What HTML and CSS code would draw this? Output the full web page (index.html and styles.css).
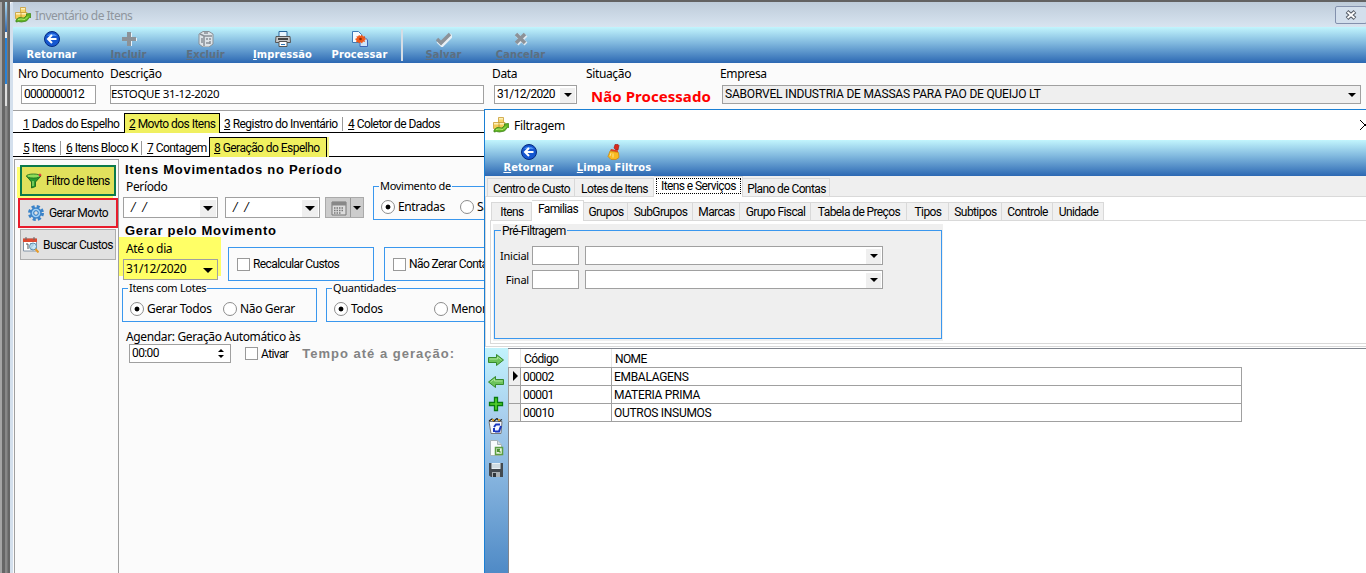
FILE: index.html
```html
<!DOCTYPE html>
<html lang="pt-BR">
<head>
  <meta charset="UTF-8">
  <title>Inventário de Itens</title>
  <link rel="stylesheet" href="styles.css">
</head>
<body>
  <svg class="simbolos" width="0" height="0">
    <symbol id="i-app" viewBox="0 0 16 16">
      <path d="M5.500.5h5v5h-5z" fill="#f7d667" stroke="#c9a03b" stroke-width=".8"/>
      <path d="M.5 5.500h5.500v6H.5zM6 5.500h6v6H6z" fill="#f3cb55" stroke="#c9a03b" stroke-width=".8"/>
      <path d="M6 1h4v1.500H6zM1 6h4.500v1.500H1zM6.500 6h5v1.500h-5z" fill="#fdf0bb"/>
      <path d="M1 13l3-2.500 5 .5 3-3-1-1 4.500-.5.5 4-1.300-.3-3.200 3.800-5 1-3-.5-2.500.5z" fill="#63b522" stroke="#3b8416" stroke-width=".8"/>
      <path d="M3 12.500l3-.5 4 .5 3-3" fill="none" stroke="#b7ea6d"/>
    </symbol>
    <symbol id="i-voltar" viewBox="0 0 16 16">
      <circle cx="8" cy="8" r="7.500" fill="#1557d0" stroke="#052a80"/>
      <path d="M3 5a6 5 0 0 1 10 0z" fill="#4d90f5"/>
      <path d="M12.500 8H5M8 4L4 8l4 4" fill="none" stroke="#fff" stroke-width="2"/>
    </symbol>
    <symbol id="i-mais" viewBox="0 0 16 16">
      <path d="M7 2h4v5h5v3h-5v5H7v-5H2V7h5z" fill="#e8f2fa"/>
      <path d="M6 1h4v5h5v4h-5v5H6v-5H1V6h5z" fill="#8c9298"/>
    </symbol>
    <symbol id="i-lixo" viewBox="0 0 16 16">
      <path d="M1 3l4-2.500h6L15 3v10l-4 3H5l-4-3z" fill="#dde3e8" stroke="#899097"/>
      <path d="M2 3l4 2h8M6 5v10M4 7v5M8 8h2m2-1v2m-4 3h4m0-2v3M6 2h4" fill="none" stroke="#899097" stroke-width="1.500"/>
    </symbol>
    <symbol id="i-impressora" viewBox="0 0 16 16">
      <path d="M4 .5h8v5H4z" fill="#e8f5ff" stroke="#28669b"/>
      <path d="M1 5.500h14l.5 6H.5z" fill="#c8c8c8" stroke="#555"/>
      <path d="M3 8h10" stroke="#444" stroke-width="2"/>
      <path d="M4 10.500h8v5H4z" fill="#fff" stroke="#555"/>
      <path d="M6 13.500h4" stroke="#2e75b6"/>
    </symbol>
    <symbol id="i-processar" viewBox="0 0 16 16">
      <path d="M.5.500h6l3 3v8h-9z" fill="#f4faff" stroke="#3d7bb8"/>
      <path d="M8 6.500h5l2.500 2.500v6.500H8z" fill="#cfe5fa" stroke="#3d66b8"/>
      <path d="M7 4l1.500 1L10 3.500l1 2 2-.5-.5 2 2 1-2 1 .5 2-2-.5-1 2L8.500 11 7 12.500 6 11l-2 .5.500-2L3 8l2-1-.5-2L6 5.500z" fill="#f15a1b"/>
      <circle cx="8.500" cy="8" r="1.300" fill="#8f2b00"/>
    </symbol>
    <symbol id="i-ok" viewBox="0 0 16 16">
      <path d="M1 9l4 4L15 3" fill="none" stroke="#e8f0f6" stroke-width="4" transform="translate(1 1)"/>
      <path d="M1 8l4 4L14 3" fill="none" stroke="#8c9298" stroke-width="3.500"/>
    </symbol>
    <symbol id="i-x" viewBox="0 0 16 16">
      <path d="M4 4l9 9M13 4l-9 9" stroke="#e0eaf2" stroke-width="4"/>
      <path d="M3 3l9 9M12 3l-9 9" stroke="#8c9298" stroke-width="3.500"/>
    </symbol>
    <symbol id="i-vassoura" viewBox="0 0 16 16">
      <path d="M8 4l1-3.500h3l1 1-1 4.500h-2z" fill="#d92a1c" stroke="#9a1510" stroke-width=".6"/>
      <path d="M5 5l7 1.500v2L4 7z" fill="#e2401f"/>
      <path d="M4 7l8.500 1.500.5 5-3 2H5l-3-3z" fill="#f8b920" stroke="#c9830c" stroke-width=".7"/>
      <path d="M5 9l-1 3m3-2.500v4" stroke="#fde58a"/>
    </symbol>
    <symbol id="i-funil" viewBox="0 0 16 16">
      <path d="M.5 3l5 6v6l4-1.500V9L15 3z" fill="#2b9a2e" stroke="#0b5b15" stroke-width=".8"/>
      <ellipse cx="7.500" cy="3" rx="7" ry="2" fill="#8fdc5a" stroke="#146b1c" stroke-width=".8"/>
      <path d="M7 8v5" stroke="#9be070" stroke-width="1.300"/>
      <path d="M14 0l.7 1.500 1.300.5-1.300.7L14 4l-.7-1.300L12 2l1.300-.5z" fill="#e5243b"/>
    </symbol>
    <symbol id="i-engrenagem" viewBox="0 0 16 16">
      <circle cx="8" cy="8" r="6.500" fill="none" stroke="#3b83c8" stroke-width="3" stroke-dasharray="3 2.100"/>
      <circle cx="8" cy="8" r="5" fill="#9fd0f7" stroke="#3b83c8" stroke-width="1.500"/>
      <circle cx="8" cy="8" r="2.300" fill="#e1e1e1" stroke="#2775bf"/>
    </symbol>
    <symbol id="i-agenda" viewBox="0 0 16 16">
      <path d="M.5 2h13v12H.5z" fill="#fff" stroke="#8293a5"/>
      <path d="M0 1.500h14V5H0z" fill="#dc4a30"/>
      <path d="M3 0v3M11 0v3" stroke="#666"/>
      <path d="M3 7h2v5M7 7h3v2H8v3h2" fill="none" stroke="#555"/>
      <circle cx="10" cy="9.500" r="3.500" fill="#b9e2f8" fill-opacity=".8" stroke="#5d8fae"/>
      <path d="M12.500 12l3 3.500" stroke="#e59b2b" stroke-width="2"/>
    </symbol>
    <symbol id="i-calendario" viewBox="0 0 16 16">
      <path d="M1 2h14v13H1z" fill="#dcdcdc" stroke="#777"/>
      <path d="M1 2h14v3.500H1z" fill="#888"/>
      <path d="M3 8h10M3 10.500h10M3 13h7" stroke="#777" stroke-width="1.300" stroke-dasharray="1.500 1"/>
    </symbol>
    <symbol id="i-seta" viewBox="0 0 16 16">
      <path d="M.5 5.500h8v-3l7 5.500-7 5.500v-3h-8z" fill="#6cc35b" stroke="#358a2d"/>
      <path d="M1.500 7h8V5l4 3" fill="none" stroke="#a9e397"/>
    </symbol>
    <symbol id="i-adicionar" viewBox="0 0 16 16">
      <path d="M6.500 1.500h3v5h5v3h-5v5h-3v-5h-5v-3h5z" fill="#54d12c" stroke="#087a10" stroke-width="1.300"/>
    </symbol>
    <symbol id="i-lixeira" viewBox="0 0 16 16">
      <path d="M1 3.500h13l-1 12H3z" fill="#f5f7ff" stroke="#777"/>
      <path d="M1 3l3-2 2 2 3-2.500L11 3l3-1.500" fill="#fff" stroke="#222" stroke-width="1.300"/>
      <path d="M4 2h2m4 0h2" stroke="#d39a28" stroke-width="2"/>
      <path d="M6 9l2-2.500h4M13 8l-2 5.500H7M6 10v4" fill="none" stroke="#1836bd" stroke-width="2"/>
    </symbol>
    <symbol id="i-exportar" viewBox="0 0 16 16">
      <path d="M2.500.5h7l4 4v11h-11z" fill="#f8fbfc" stroke="#a5b3b8"/>
      <path d="M9.500.5v4h4" fill="#d4dde0" stroke="#a5b3b8"/>
      <path d="M7.500 7.500h7v7h-7z" fill="#e6f5dd" stroke="#5c9e43" stroke-width="1.500"/>
      <path d="M12.500 12.500l-3-3M9.500 12V9.500H12" fill="none" stroke="#4c9132" stroke-width="1.300"/>
    </symbol>
    <symbol id="i-disquete" viewBox="0 0 16 16">
      <path d="M1 1h14v14H3l-2-1.500z" fill="#43494f"/>
      <path d="M3.500 1h9v6h-9z" fill="#e9f1f5"/>
      <path d="M4 3h8M4 5h8" stroke="#b7c7cf"/>
      <path d="M4 10h8v5H4z" fill="#a9afb3"/>
      <path d="M5 11h3v4H5z" fill="#30353a"/>
    </symbol>
  </svg>

  <div class="tela">
    <div class="fundo"></div>

    <!-- Janela principal -->
    <div class="janela">
      <div class="barra-titulo">
        <svg class="icone"><use href="#i-app"/></svg>
        <span class="titulo">Inventário de Itens</span>
        <span class="fechar"><svg width="12" height="10" viewBox="0 0 12 10"><path d="M2 1.500l8 7M10 1.500l-8 7" stroke="#555c66" stroke-width="4"/><path d="M2.500 2l7 6M9.500 2l-7 6" stroke="#fff" stroke-width="1.800"/></svg></span>
      </div>

      <div class="ferramentas">
        <div class="botao"><svg class="icone"><use href="#i-voltar"/></svg><span>Retornar</span></div>
        <div class="botao inativo"><svg class="icone"><use href="#i-mais"/></svg><span><u>I</u>ncluir</span></div>
        <div class="botao inativo"><svg class="icone"><use href="#i-lixo"/></svg><span><u>E</u>xcluir</span></div>
        <div class="botao"><svg class="icone"><use href="#i-impressora"/></svg><span><u>I</u>mpressão</span></div>
        <div class="botao"><svg class="icone"><use href="#i-processar"/></svg><span>Processar</span></div>
        <div class="separador"></div>
        <div class="botao inativo"><svg class="icone"><use href="#i-ok"/></svg><span><u>S</u>alvar</span></div>
        <div class="botao inativo"><svg class="icone"><use href="#i-x"/></svg><span><u>C</u>ancelar</span></div>
      </div>

      <div class="cabecalho">
        <div class="campo c-nro"><label>Nro Documento</label><div class="caixa">0000000012</div></div>
        <div class="campo c-desc"><label>Descrição</label><div class="caixa tahoma">ESTOQUE 31-12-2020</div></div>
        <div class="campo c-data"><label>Data</label><div class="caixa">31/12/2020<i class="seta"></i></div></div>
        <div class="campo c-sit"><label>Situação</label><strong>Não Processado</strong></div>
        <div class="campo c-emp"><label>Empresa</label><div class="caixa cinza">SABORVEL INDUSTRIA DE MASSAS PARA PAO DE QUEIJO LT<i class="seta"></i></div></div>
      </div>

      <div class="abas primeira">
        <span class="aba a1"><u>1</u> Dados do Espelho</span>
        <span class="aba a2 ativa"><u>2</u> Movto dos Itens</span>
        <span class="aba a3 div"><u>3</u> Registro do Inventário</span>
        <span class="aba a4"><u>4</u> Coletor de Dados</span>
      </div>
      <div class="abas">
        <span class="aba b1 div"><u>5</u> Itens</span>
        <span class="aba b2 div"><u>6</u> Itens Bloco K</span>
        <span class="aba b3"><u>7</u> Contagem</span>
        <span class="aba b4 ativa"><u>8</u> Geração do Espelho</span>
      </div>

      <div class="corpo">
        <div class="lateral">
          <div class="acao filtro"><svg class="icone"><use href="#i-funil"/></svg>Filtro de Itens</div>
          <div class="acao gerar"><svg class="icone"><use href="#i-engrenagem"/></svg>Gerar Movto</div>
          <div class="acao buscar"><svg class="icone"><use href="#i-agenda"/></svg>Buscar Custos</div>
        </div>

        <div class="painel">
          <h2>Itens Movimentados no Período</h2>
          <div class="linha periodo">
            <div class="campo">
              <label>Período</label>
              <div class="datas">
                <div class="caixa data"><em>/</em><em>/</em><i class="seta"></i></div>
                <div class="caixa data"><em>/</em><em>/</em><i class="seta"></i></div>
                <div class="calendario"><svg class="icone"><use href="#i-calendario"/></svg><i class="seta"></i></div>
              </div>
            </div>
            <div class="grupo movimento">
              <span class="legenda">Movimento de</span>
              <span class="radio marcado r80">Entradas</span><span class="radio">Saídas</span>
            </div>
          </div>

          <h2 class="segundo">Gerar pelo Movimento</h2>
          <div class="linha ate">
            <div class="campo destaque">
              <label>Até o dia</label>
              <div class="caixa data tahoma">31/12/2020<i class="seta"></i></div>
            </div>
            <div class="grupo recalcular"><span class="check">Recalcular Custos</span></div>
            <div class="grupo zerar"><span class="check">Não Zerar Contagem</span></div>
          </div>

          <div class="linha lotes">
            <div class="grupo g-lotes">
              <span class="legenda">Itens com Lotes</span>
              <span class="radio marcado r93">Gerar Todos</span><span class="radio">Não Gerar</span>
            </div>
            <div class="grupo g-qtd">
              <span class="legenda">Quantidades</span>
              <span class="radio marcado r100">Todos</span><span class="radio">Menor</span>
            </div>
          </div>

          <label class="agendar">Agendar: Geração Automático às</label>
          <div class="linha hora">
            <div class="caixa">00:00<span class="giro"><i></i><i></i></span></div>
            <span class="check">Ativar</span>
            <b>Tempo até a geração:</b>
          </div>
        </div>
      </div>
    </div>

    <!-- Janela de filtragem -->
    <div class="dialogo">
      <div class="barra-titulo">
        <svg class="icone"><use href="#i-app"/></svg>
        <span class="titulo">Filtragem</span>
        <svg class="xis" width="10" height="10" viewBox="0 0 10 10"><path d="M0 0l10 10M10 0L0 10" stroke="#000"/></svg>
      </div>
      <div class="ferramentas">
        <div class="botao retornar"><svg class="icone"><use href="#i-voltar"/></svg><span><u>R</u>etornar</span></div>
        <div class="botao limpa"><svg class="icone"><use href="#i-vassoura"/></svg><span><u>L</u>impa Filtros</span></div>
      </div>

      <div class="guias">
        <span class="guia g1">Centro de Custo</span>
        <span class="guia g2">Lotes de Itens</span>
        <span class="guia g3 ativa"><span class="foco">Itens e Serviços</span></span>
        <span class="guia g4">Plano de Contas</span>
      </div>
      <div class="pagina">
        <div class="guias internas">
          <span class="guia h1">Itens</span>
          <span class="guia h2 ativa">Familias</span>
          <span class="guia h3">Grupos</span>
          <span class="guia h4">SubGrupos</span>
          <span class="guia h5">Marcas</span>
          <span class="guia h6">Grupo Fiscal</span>
          <span class="guia h7">Tabela de Preços</span>
          <span class="guia h8">Tipos</span>
          <span class="guia h9">Subtipos</span>
          <span class="guia h10">Controle</span>
          <span class="guia h11">Unidade</span>
        </div>
        <div class="pagina-interna">
          <div class="fundo-grupo">
            <div class="grupo pre">
              <span class="legenda">Pré-Filtragem</span>
              <div class="faixa"><label>Inicial</label><div class="caixa cod"></div><div class="caixa combo"><i class="seta"></i></div></div>
              <div class="faixa"><label>Final</label><div class="caixa cod"></div><div class="caixa combo"><i class="seta"></i></div></div>
            </div>
          </div>
        </div>
      </div>

      <div class="resultado">
        <div class="atalhos">
          <svg class="icone"><use href="#i-seta"/></svg>
          <svg class="icone invertida"><use href="#i-seta"/></svg>
          <svg class="icone"><use href="#i-adicionar"/></svg>
          <svg class="icone"><use href="#i-lixeira"/></svg>
          <svg class="icone"><use href="#i-exportar"/></svg>
          <svg class="icone"><use href="#i-disquete"/></svg>
        </div>
        <div class="grade">
          <table>
            <tr><th class="ind"></th><th class="cod">Código</th><th>NOME</th></tr>
            <tr><td class="ind atual"><i></i></td><td>00002</td><td class="nome">EMBALAGENS</td></tr>
            <tr><td class="ind"></td><td>00001</td><td class="nome">MATERIA PRIMA</td></tr>
            <tr><td class="ind"></td><td>00010</td><td class="nome">OUTROS INSUMOS</td></tr>
          </table>
        </div>
      </div>
    </div>
  </div>
</body>
</html>
```

FILE: styles.css
```css
* {
  box-sizing: border-box;
}

body {
  margin: 0;
  overflow: hidden;
  font-family: Roboto, "Liberation Sans", sans-serif;
  font-size: 12px;
  line-height: 14px;
  letter-spacing: -0.6px;
  color: #000;
  white-space: nowrap;
}

.simbolos {
  position: absolute;
}

.tela {
  position: relative;
  display: flex;
  width: 1366px;
  height: 573px;
  background: #fbfbfb;
  border-top: 2px solid #626262;
  overflow: hidden;
}

/* restos das janelas que ficam atras */
.fundo {
  width: 10px;
  flex: none;
  border-left: 2px solid #a5a5a5;
  border-right: 2px solid #666;
  background:
    linear-gradient(90deg, #666 3px, transparent 3px, transparent 5px, #777 5px),
    linear-gradient(#b6dff3, #2d65ad 30px, #e9eef3 30px, #e9eef3 36px, #2983d8 36px, #2983d8 82px, #ddd 82px, #ddd 104px, #888 104px);
}

.icone {
  width: 16px;
  height: 16px;
  flex: none;
  display: block;
}

.janela {
  flex: 1;
  min-width: 0;
  display: flex;
  flex-direction: column;
  border-left: 3px solid #d4e0ed;
  border-top-left-radius: 4px;
}

.barra-titulo {
  display: flex;
  align-items: center;
  height: 25px;
  flex: none;
  padding-left: 2px;
  background: linear-gradient(#bdcbd9, #d8e4f0);
}

.titulo {
  font: 12px/16px "Noto Sans", sans-serif;
  letter-spacing: -0.5px;
  margin-left: 4px;
  padding-top: 2px;
  color: #8f969e;
}

.fechar {
  display: flex;
  align-items: center;
  justify-content: center;
  width: 32px;
  height: 18px;
  margin-left: auto;
  margin-right: -1px;
  border: 1px solid #8391ad;
  border-radius: 2px;
  background: #d3dfec;
}

.ferramentas {
  display: flex;
  height: 36px;
  flex: none;
  background: linear-gradient(#c2f5fd, #80b8de 45%, #2c68b3);
}

.botao {
  display: flex;
  flex-direction: column;
  align-items: center;
  width: 77px;
  padding-top: 4px;
  font: bold 11px/16px "DejaVu Sans Condensed", "DejaVu Sans", sans-serif;
  font-stretch: condensed;
  letter-spacing: 0.1px;
  color: #fff;
}

.botao.inativo {
  color: #5d6f80;
}

.separador {
  width: 2px;
  margin: 2px 2px 2px 3px;
  background: #d5dde5;
}

/* campos */
label,
.tahoma,
.radio,
.legenda {
  font-family: "Noto Sans", sans-serif;
  font-size: 12px;
  letter-spacing: -0.36px;
}

.cabecalho {
  display: flex;
  height: 48px;
  flex: none;
  padding: 4px 5px 0;
  border-bottom: 1px solid #a0a0a0;
}

.campo label {
  display: block;
  height: 18px;
  line-height: 14px;
}

.caixa {
  display: flex;
  align-items: center;
  height: 19px;
  padding: 0 2px;
  border: 1px solid #a0a0a0;
  background: #fff;
  line-height: 16px;
  padding-bottom: 1px;
}

.caixa.cinza {
  background: #efefef;
}

.seta {
  display: flex;
  align-items: center;
  justify-content: center;
  width: 15px;
  height: 15px;
  margin-left: auto;
  margin-right: -1px;
  position: relative;
  top: 1px;
  background: #efefef;
}

.seta::before {
  content: "";
  border: 4px solid transparent;
  border-top-color: #000;
  border-bottom: 0;
}

.c-nro { width: 92px; }
.c-nro .caixa { width: 75px; margin-left: 3px; letter-spacing: -0.75px; }
.c-desc { width: 382px; }
.c-desc .caixa { width: 374px; font-size: 11.500px; padding-left: 0; }
.c-data { width: 94px; }
.c-data .caixa { width: 83px; margin-left: 2px; }
.c-sit { width: 134px; }
.c-emp .caixa { width: 639px; margin-left: 2px; letter-spacing: -0.2px; }

.c-sit strong {
  display: block;
  margin: 1px 0 0 5px;
  font: bold 15px/20px "Noto Sans", sans-serif;
  letter-spacing: 0.05px;
  color: #f00;
}

/* abas */
.abas {
  display: flex;
  align-items: flex-end;
  height: 24px;
  flex: none;
  padding-left: 5px;
  letter-spacing: -0.54px;
  background: linear-gradient(#000, #000) bottom / 100% 1px no-repeat #fff;
}

.abas.primeira {
  height: 22px;
}

.aba {
  height: 20px;
  padding: 4px 0 0 5px;
}

.aba.ativa {
  padding: 3px 0 0 4px;
  background: #f0f060;
  border: 1px solid #000;
  border-bottom: 0;
}

.aba.div {
  background: linear-gradient(#999, #999) right 4px / 1px 14px no-repeat;
}

.a1 { width: 106px; }
.a2 { width: 96px; }
.a3 { width: 123px; padding-left: 4px; }
.b1 { width: 43px; }
.b2 { width: 81px; }
.b3 { width: 67px; }
.b4 { width: 118px; box-shadow: 2px 0 #f6f68a; }

/* corpo */
.corpo {
  display: flex;
  flex: 1;
  padding: 2px 0 0 1px;
}

.lateral {
  width: 105px;
  padding: 5px 0 0 4px;
  border: 1px solid #a0a0a0;
  border-bottom: 0;
  flex: none;
}

.acao {
  display: flex;
  align-items: center;
  gap: 4px;
  height: 31px;
  width: 96px;
  margin-left: 1px;
  padding-left: 4px;
  background: #e1e1e1;
  border: 1px solid #adadad;
}

.acao.filtro {
  background: #e1e15c;
  border: 2px solid #0b7a4b;
  box-shadow: -3px 2px #ffff70;
}

.acao.gerar {
  width: 100px;
  height: 30px;
  margin: 2px 0 0 -1px;
  padding-left: 8px;
  gap: 5px;
  border: 2px solid #e81c2c;
}

.acao.buscar {
  padding-left: 2px;
  margin-top: 1px;
}

.painel {
  flex: 1;
  padding-left: 4px;
}

h2 {
  margin: 2px 0 -1px 2px;
  font: bold 13px/18px "Liberation Sans", sans-serif;
  letter-spacing: 0.72px;
}

.linha {
  display: flex;
}

.periodo {
  height: 42px;
}

.periodo label {
  padding: 2px 0 0 3px;
  height: 19px;
}

.datas {
  display: flex;
  gap: 7px;
}

.caixa.data {
  width: 95px;
  height: 21px;
}

.data .seta {
  width: 16px;
  height: 17px;
}

.data .seta::before {
  border-width: 5px;
  border-bottom: 0;
}

.data em {
  margin: 0 2px 0 5px;
}

.calendario {
  display: flex;
  align-items: center;
  width: 39px;
  height: 21px;
  margin-left: -2px;
  padding-left: 5px;
  background: #ccc;
  border: 1px solid #aaa;
}

.calendario .seta {
  width: 13px;
  height: 19px;
  margin: 0 0 0 auto;
  top: 0;
  background: none;
  border-left: 1px solid #999;
}

.grupo {
  position: relative;
  display: flex;
  border: 1px solid #3a97ee;
}

.legenda {
  position: absolute;
  left: 5px;
  top: -8px;
  padding: 0 1px;
  font-size: 11px;
  line-height: 14px;
  letter-spacing: -0.3px;
  background: #fbfbfb;
}

.radio,
.check {
  display: flex;
  align-items: center;
}

.radio::before {
  content: "";
  width: 12px;
  height: 12px;
  margin-right: 3px;
  border: 1px solid #8c8c8c;
  border-radius: 50%;
  background: #fff;
}

.radio.marcado::before {
  background: radial-gradient(circle, #000 2px, #fff 2.8px);
}

.r80 { width: 79px; }
.r93 { width: 93px; }
.r100 { width: 100px; }

.check::before {
  content: "";
  width: 11px;
  height: 11px;
  margin-right: 3px;
  border: 1px solid #999;
  background: #fff;
}

.movimento {
  width: 200px;
  height: 34px;
  margin: 8px 0 0 9px;
  padding: 8px 0 0 7px;
}

.ate {
  height: 41px;
  margin-top: -3px;
}

.destaque {
  width: 102px;
  height: 39px;
  margin-left: -4px;
  padding-left: 4px;
  background: #ffff66;
}

.destaque label {
  padding: 5px 0 0 3px;
  height: 22px;
}

.destaque .caixa,
.destaque .seta {
  background: #ffff66;
}

.recalcular,
.zerar {
  height: 34px;
  margin-top: 10px;
  padding-left: 8px;
}

.recalcular {
  width: 146px;
  margin-left: 7px;
}

.zerar {
  width: 160px;
  margin-left: 10px;
}

.lotes {
  margin: 10px 0 0 -1px;
}

.g-lotes,
.g-qtd {
  height: 34px;
  padding: 8px 0 0 7px;
}

.g-lotes { width: 195px; }
.g-qtd { width: 200px; margin-left: 9px; }

.agendar {
  display: block;
  margin: 8px 0 0 3px;
}

.hora {
  align-items: center;
  margin: 0 0 0 6px;
}

.hora .caixa {
  width: 102px;
  margin-right: 14px;
}

.giro {
  display: flex;
  flex-direction: column;
  gap: 3px;
  margin-left: auto;
  padding: 0 4px;
}

.giro i {
  border: 3px solid transparent;
  border-top: 0;
  border-bottom-color: #000;
}

.giro i + i {
  transform: rotate(180deg);
}

.hora b {
  margin-left: 14px;
  font: bold 13px/16px "Liberation Sans", sans-serif;
  letter-spacing: 1px;
  color: #838383;
}

/* janela de filtragem, por cima da principal */
.dialogo {
  position: absolute;
  left: 484px;
  top: 107px;
  width: 882px;
  height: 464px;
  display: flex;
  flex-direction: column;
  background: #fff;
  border: 1px solid #1a7fd4;
  border-right: 0;
  border-bottom: 0;
}

.dialogo .barra-titulo {
  height: 30px;
  padding-left: 8px;
  background: #fff;
}

.dialogo .titulo {
  margin-left: 5px;
  letter-spacing: -0.3px;
  color: #000;
}

.xis {
  margin-left: auto;
  margin-right: -4px;
}

.botao.retornar {
  width: 87px;
}

.botao.limpa {
  width: 84px;
}

.guias {
  display: flex;
  align-items: flex-end;
  height: 21px;
  flex: none;
  padding-left: 2px;
  background: linear-gradient(#d9d9d9, #d9d9d9) bottom / 100% 1px no-repeat #efefef;
}

.guia {
  height: 19px;
  padding: 3px 0 0 1px;
  text-align: center;
  background: #f0f0f0;
  border: 1px solid #d9d9d9;
  border-left: 0;
}

.guia:first-child {
  border-left: 1px solid #d9d9d9;
}

.guia.ativa {
  height: 21px;
  background: #fff;
  border-bottom: 0;
  padding-top: 2px;
}

.foco {
  outline: 1px dotted #000;
  padding: 0 4px;
}

.g1 { width: 88px; }
.g2 { width: 79px; }
.g3 { width: 89px; }
.g4 { width: 87px; }

.pagina {
  height: 150px;
  padding: 3px 0 0 4px;
  border-left: 1px solid #d9d9d9;
  border-bottom: 1px solid #d9d9d9;
}

.internas {
  background: linear-gradient(#d9d9d9, #d9d9d9) bottom / 100% 1px no-repeat #fff;
  padding-left: 1px;
}

.internas .guia {
  line-height: 13px;
}

.h1 { width: 41px; }
.h2 { width: 52px; }
.h3 { width: 44px; }
.h4 { width: 65px; }
.h5 { width: 47px; }
.h6 { width: 71px; }
.h7 { width: 96px; }
.h8 { width: 42px; }
.h9 { width: 53px; }
.h10 { width: 51px; }
.h11 { width: 51px; }

.pagina-interna {
  height: 123px;
  padding: 3px 0 0 2px;
  border-left: 1px solid #d9d9d9;
  border-bottom: 1px solid #d9d9d9;
}

.fundo-grupo {
  width: 450px;
  height: 117px;
  padding: 6px 0 0 1px;
  background: #efefef;
}

.pre {
  flex-direction: column;
  gap: 5px;
  width: 448px;
  height: 109px;
  padding-top: 15px;
}

.pre .legenda {
  left: 6px;
  top: -7px;
  background: #efefef;
  font-family: Roboto, sans-serif;
  font-size: 12px;
  letter-spacing: -0.6px;
}

.faixa {
  display: flex;
  align-items: center;
}

.faixa label {
  width: 34px;
  margin-right: 3px;
  text-align: right;
  font-size: 11px;
  letter-spacing: -0.2px;
}

.faixa .cod {
  width: 47px;
  margin-right: 6px;
}

.faixa .combo {
  width: 298px;
}

.resultado {
  display: flex;
  flex: 1;
  margin-top: 1px;
}

.atalhos {
  display: flex;
  flex-direction: column;
  gap: 6px;
  width: 23px;
  padding: 4px 0 0 3px;
  background: linear-gradient(#c2f3fc, #a9cfee 30%, #4f8ac6);
}

.invertida {
  transform: scaleX(-1);
}

.grade {
  flex: 1;
  border-top: 1px solid #80858e;
  border-left: 1px solid #80858e;
}

.grade table {
  border-collapse: collapse;
  table-layout: fixed;
  width: 734px;
  margin-left: -1px;
}

.grade th,
.grade td {
  height: 18px;
  padding: 2px 2px 0;
  font-weight: normal;
  text-align: left;
  border: 1px solid #a0a0a0;
}

.grade th {
  padding-left: 3px;
  border-color: #e5e5e5;
  border-top: 0;
  border-bottom-color: #a0a0a0;
}

.grade th:last-child {
  border-right: 0;
}

.grade .nome {
  letter-spacing: -0.3px;
}

.grade .ind {
  width: 12px;
  padding: 0;
}

.grade td.ind {
  background: #efefef;
}

.grade th.cod {
  width: 91px;
}

.atual i {
  display: block;
  width: 0;
  margin-left: 4px;
  border: 5px solid transparent;
  border-left-color: #000;
  border-right: 0;
}
```
